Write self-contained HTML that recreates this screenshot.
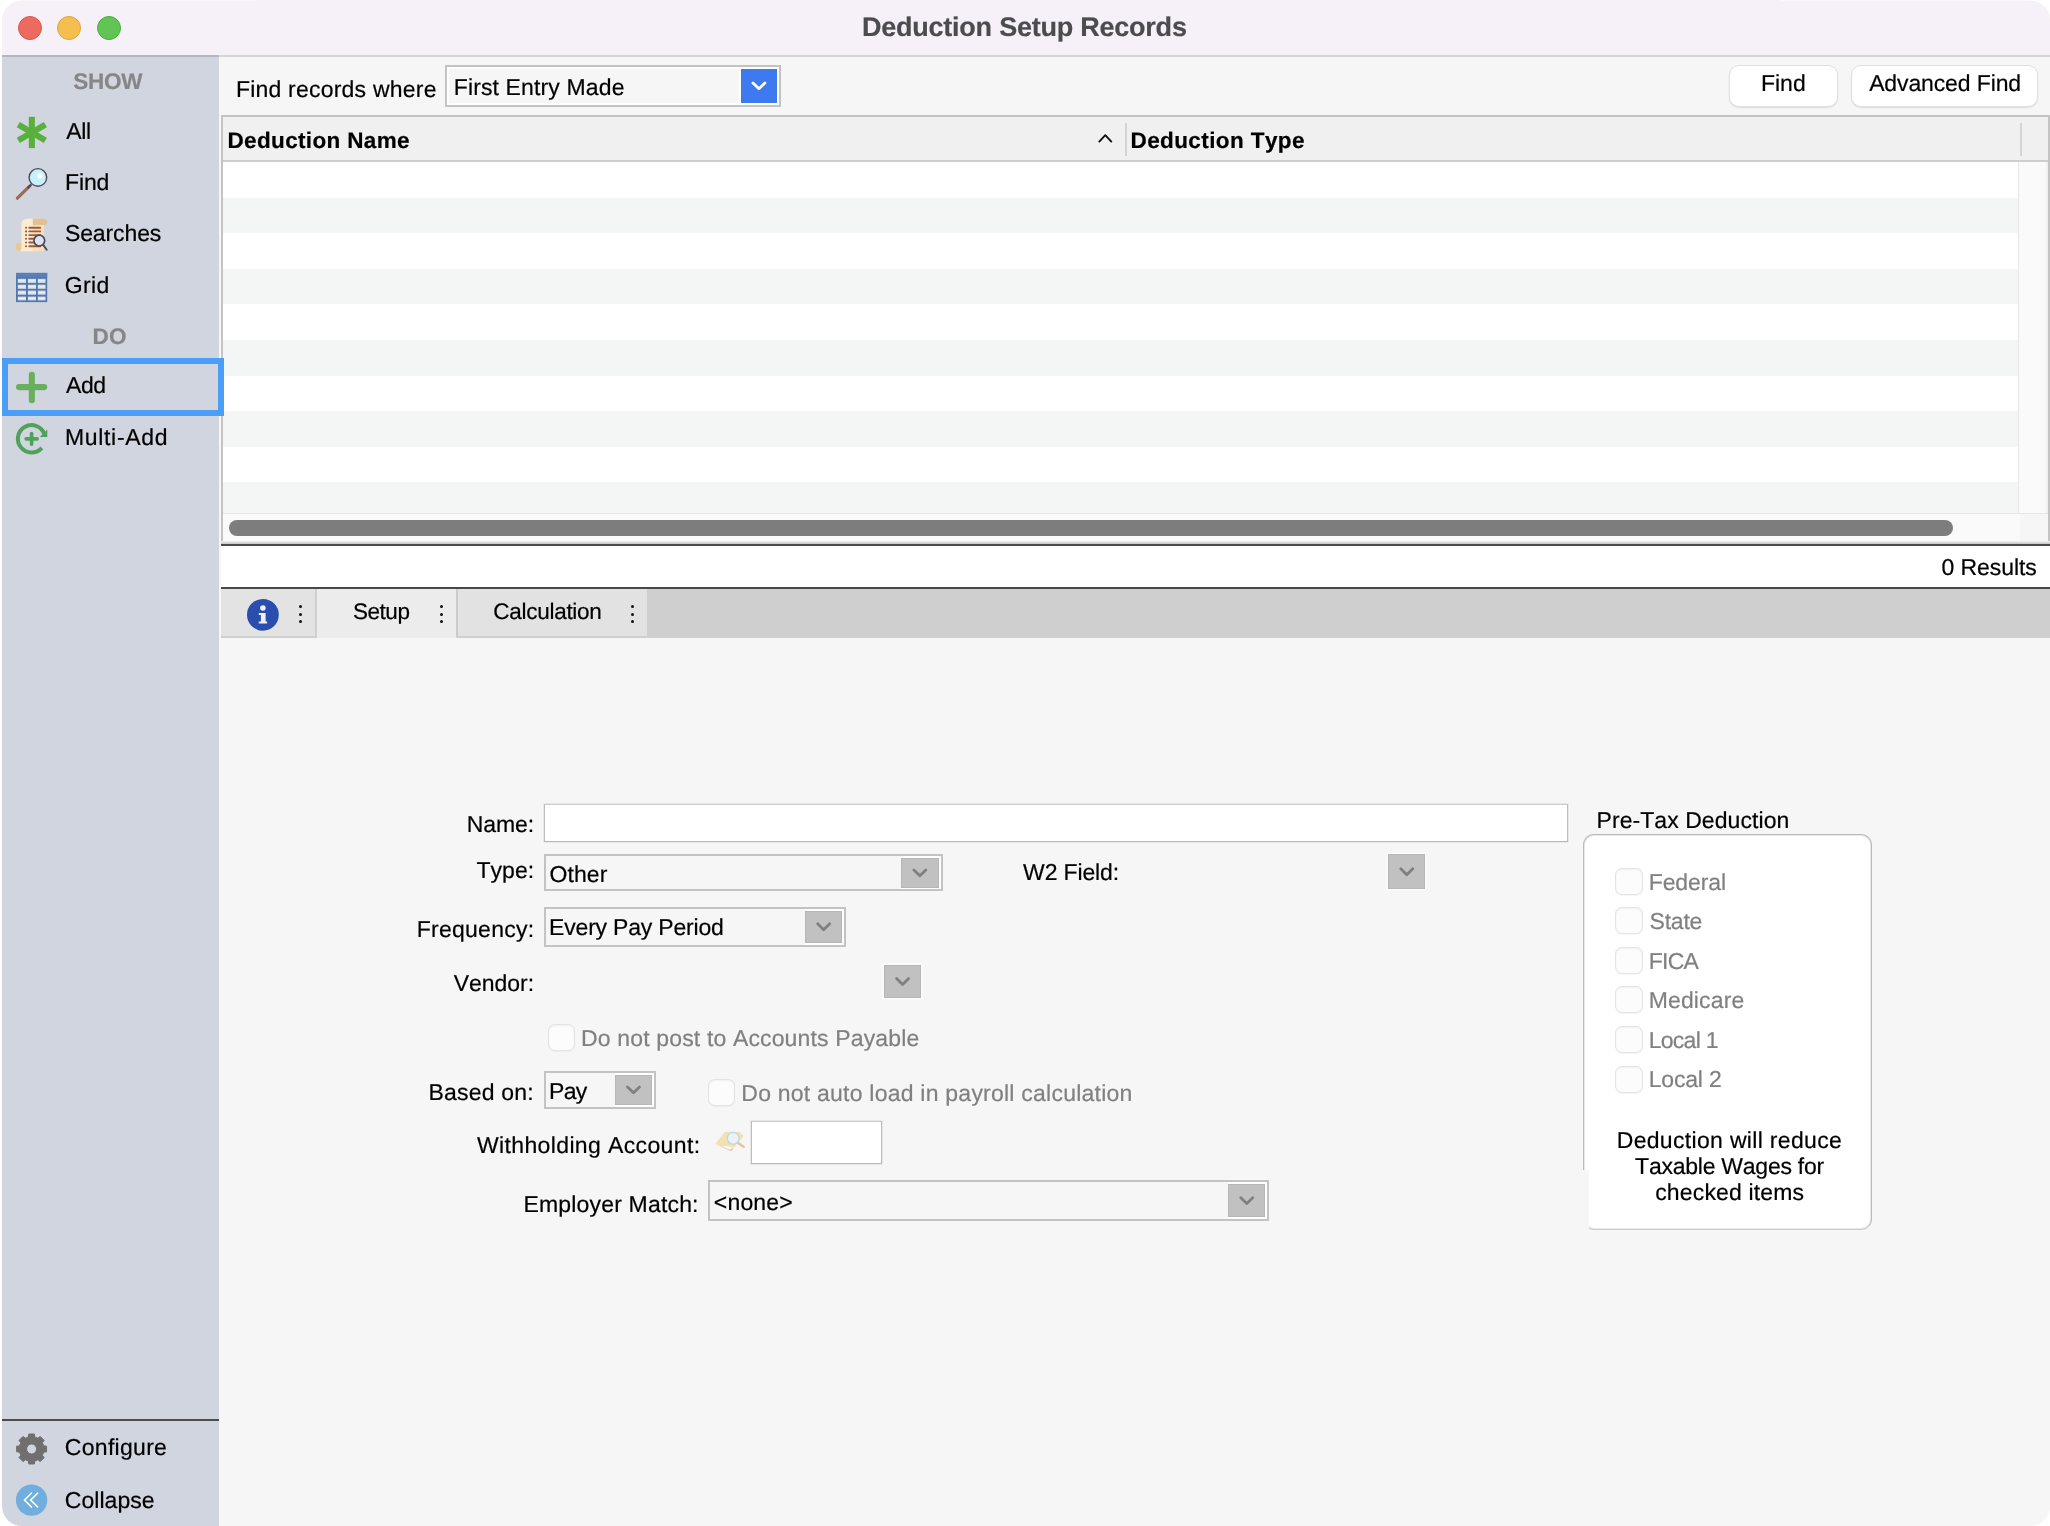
<!DOCTYPE html>
<html lang="en">
<head>
<meta charset="utf-8">
<title>Deduction Setup Records</title>
<style>
html,body{margin:0;padding:0;background:#fff;}
body{width:2050px;height:1526px;position:relative;overflow:hidden;font-family:"Liberation Sans",sans-serif;color:#000;}
#win{position:absolute;left:0;top:0;width:2050px;height:1526px;background:#f6f6f6;overflow:hidden;clip-path:inset(.5px 0 0 2px round 20px);will-change:transform;}
#win *{box-sizing:border-box;}
.a{position:absolute;}
.t{position:absolute;white-space:nowrap;-webkit-text-stroke:.2px;text-rendering:geometricPrecision;font-kerning:none;}
#titlebar{position:absolute;left:0;top:0;width:2050px;height:55px;background:#f6f1f8;}
.tl{position:absolute;width:24px;height:24px;border-radius:50%;top:16px;}
#sidebar{position:absolute;left:0;top:56px;width:219px;height:1470px;background:#d1d5df;}
.combo{position:absolute;border:2px solid #c3c3c3;background:#f6f6f6;}
.combo.f{box-shadow:inset 0 0 0 2px #fefefe;}
.dd{position:absolute;background:#c1c1c1;border:1px solid #b7b7b7;box-shadow:0 0 0 1.5px #fbfbfb;}
.dd.c{box-shadow:none;}
.wr{position:absolute;background:#fefefe;}
.dd svg{position:absolute;left:0;top:0;width:100%;height:100%;}
.btn{position:absolute;background:#fff;border:1px solid #e0e0e0;border-radius:10px;box-shadow:0 1px 1.5px rgba(0,0,0,.10);}
.cb{position:absolute;width:27.4px;height:27px;border-radius:7px;background:#fcfcfc;border:1px solid #e4e4e4;box-shadow:inset 0 1px 2px rgba(0,0,0,.05),0 .5px 1px rgba(0,0,0,.04);}
.row{position:absolute;left:224px;width:1796px;background:#f4f5f5;}
.inp{position:absolute;background:#fff;border:1px solid #bcbcbc;border-top-color:#cbcbcb;box-shadow:0 0 0 .6px #dcdcdc;}
.dots{position:absolute;width:4px;}
.dots i{position:absolute;left:0;width:3px;height:3px;border-radius:50%;background:#111;}
</style>
</head>
<body>
<div id="win">
<div id="titlebar">
<div class="tl" style="left:18px;background:#ed6a5e;border:1px solid #d8574c;"></div>
<div class="tl" style="left:57px;background:#f5bf4f;border:1px solid #dba640;"></div>
<div class="tl" style="left:97px;background:#61c554;border:1px solid #50a840;"></div>
<div class="t" style="left:861.99px;top:12px;font-size:27px;line-height:30px;letter-spacing:-0.233px;font-weight:700;color:#4c4b4e;">Deduction Setup Records</div>
</div>
<div id="sidebar"></div>
<div class="a" style="left:0;top:55px;width:219px;height:1.7px;background:#b3b7c3;"></div>
<div class="a" style="left:219px;top:55px;width:1831px;height:1.7px;background:#d5d5d5;"></div>
<div class="t" style="left:73.35px;top:69px;font-size:22.5px;line-height:25px;letter-spacing:-0.275px;font-weight:700;color:#868686;">SHOW</div>
<div class="t" style="left:66.16px;top:118px;font-size:23px;line-height:26px;letter-spacing:-0.289px;">All</div>
<div class="t" style="left:65.11px;top:169px;font-size:23px;line-height:26px;letter-spacing:-0.158px;">Find</div>
<div class="t" style="left:64.96px;top:220px;font-size:23px;line-height:26px;letter-spacing:-0.113px;">Searches</div>
<div class="t" style="left:64.84px;top:272px;font-size:23px;line-height:26px;letter-spacing:0.363px;">Grid</div>
<div class="t" style="left:92.39px;top:324px;font-size:22.5px;line-height:25px;letter-spacing:0.500px;font-weight:700;color:#868686;">DO</div>
<div class="t" style="left:65.96px;top:372px;font-size:23px;line-height:26px;letter-spacing:-0.398px;">Add</div>
<div class="t" style="left:65.01px;top:424px;font-size:23px;line-height:26px;letter-spacing:0.666px;">Multi-Add</div>
<div class="t" style="left:64.83px;top:1434px;font-size:23px;line-height:26px;letter-spacing:0.295px;">Configure</div>
<div class="t" style="left:64.83px;top:1487px;font-size:23px;line-height:26px;letter-spacing:0.042px;">Collapse</div>
<div class="a" style="left:2px;top:358px;width:222px;height:58px;border:6px solid #4a9ef6;z-index:5;"></div>
<div class="a" style="left:0;top:1419px;width:219px;height:2px;background:#4b4b4b;"></div>
<svg class="a" style="left:0;top:56px;" width="219" height="1470" viewBox="0 56 219 1470">
<g fill="#59b03c"><rect x="28.8" y="116.8" width="6.1" height="31.3"/><rect x="28.8" y="116.8" width="6.1" height="31.3" transform="rotate(60 31.85 132.45)"/><rect x="28.8" y="116.8" width="6.1" height="31.3" transform="rotate(-60 31.85 132.45)"/></g>
<g><line x1="17.4" y1="198.2" x2="28.6" y2="187.2" stroke="#9a6a56" stroke-width="3.2" stroke-linecap="round"/><line x1="27.6" y1="188.2" x2="31.4" y2="184.4" stroke="#5b4b57" stroke-width="2.6"/><circle cx="37.9" cy="177.4" r="8.8" fill="#c4f1fc" stroke="#4f4658" stroke-width="1.4"/><circle cx="40" cy="175.9" r="2.7" fill="#fff"/></g>
<g><path d="M21.4 243.4v7.8h-1.6a3.9 3.9 0 0 1-3.9-3.9v-3.9z" fill="#e9c796"/><path d="M21.4 224a5.2 5.2 0 0 1 5.2-5.2h6.3v32.4H19.6a3 3 0 0 0 1.8-2.6z" fill="#fdebd0"/><path d="M32.9 218.8h6a5 5 0 0 1 5.1 5.2v24.2a3 3 0 0 1-3 3H32.9z" fill="#fcdfb8"/><path d="M32.9 218.8H43.7a3.6 3.1 0 0 1 3.6 3.1a3.6 3.1 0 0 1-3.6 3.1H32.9z" fill="#e2c08f"/><line x1="29.3" y1="227.7" x2="40.2" y2="227.7" stroke="#9a5b45" stroke-width="1.9" stroke-linecap="round"/><circle cx="26" cy="227.7" r="1.05" fill="#9a5b45"/><line x1="29.3" y1="231.4" x2="40.2" y2="231.4" stroke="#9a5b45" stroke-width="1.9" stroke-linecap="round"/><circle cx="26" cy="231.4" r="1.05" fill="#9a5b45"/><line x1="29.3" y1="235.1" x2="40.2" y2="235.1" stroke="#9a5b45" stroke-width="1.9" stroke-linecap="round"/><circle cx="26" cy="235.1" r="1.05" fill="#9a5b45"/><line x1="29.3" y1="238.8" x2="40.2" y2="238.8" stroke="#9a5b45" stroke-width="1.9" stroke-linecap="round"/><circle cx="26" cy="238.8" r="1.05" fill="#9a5b45"/><line x1="29.3" y1="242.5" x2="40.2" y2="242.5" stroke="#9a5b45" stroke-width="1.9" stroke-linecap="round"/><circle cx="26" cy="242.5" r="1.05" fill="#9a5b45"/><line x1="29.3" y1="246.2" x2="40.2" y2="246.2" stroke="#9a5b45" stroke-width="1.9" stroke-linecap="round"/><circle cx="26" cy="246.2" r="1.05" fill="#9a5b45"/><circle cx="39.3" cy="240.6" r="5.4" fill="#dde3f5" stroke="#474b53" stroke-width="1.7"/><line x1="43.2" y1="244.9" x2="46.7" y2="249.8" stroke="#474b53" stroke-width="1.9" stroke-linecap="round"/></g>
<g><rect x="16" y="272.9" width="31.2" height="29.2" fill="#4f77b2"/><rect x="16" y="272.9" width="31.2" height="4" fill="#587fb6"/><rect x="17.8" y="278.8" width="8.2" height="4.1" fill="#dadde4"/><rect x="18.2" y="280.35" width="7.4" height="1" fill="#f0f1f4"/><rect x="17.8" y="284.7" width="8.2" height="4.1" fill="#dadde4"/><rect x="18.2" y="286.25" width="7.4" height="1" fill="#f0f1f4"/><rect x="17.8" y="290.6" width="8.2" height="4.1" fill="#dadde4"/><rect x="18.2" y="292.15" width="7.4" height="1" fill="#f0f1f4"/><rect x="17.8" y="296.6" width="8.2" height="3.8" fill="#dadde4"/><rect x="18.2" y="298.00" width="7.4" height="1" fill="#f0f1f4"/><rect x="27.9" y="278.8" width="8.1" height="4.1" fill="#dadde4"/><rect x="28.299999999999997" y="280.35" width="7.3" height="1" fill="#f0f1f4"/><rect x="27.9" y="284.7" width="8.1" height="4.1" fill="#dadde4"/><rect x="28.299999999999997" y="286.25" width="7.3" height="1" fill="#f0f1f4"/><rect x="27.9" y="290.6" width="8.1" height="4.1" fill="#dadde4"/><rect x="28.299999999999997" y="292.15" width="7.3" height="1" fill="#f0f1f4"/><rect x="27.9" y="296.6" width="8.1" height="3.8" fill="#dadde4"/><rect x="28.299999999999997" y="298.00" width="7.3" height="1" fill="#f0f1f4"/><rect x="37.8" y="278.8" width="7.7" height="4.1" fill="#dadde4"/><rect x="38.199999999999996" y="280.35" width="6.9" height="1" fill="#f0f1f4"/><rect x="37.8" y="284.7" width="7.7" height="4.1" fill="#dadde4"/><rect x="38.199999999999996" y="286.25" width="6.9" height="1" fill="#f0f1f4"/><rect x="37.8" y="290.6" width="7.7" height="4.1" fill="#dadde4"/><rect x="38.199999999999996" y="292.15" width="6.9" height="1" fill="#f0f1f4"/><rect x="37.8" y="296.6" width="7.7" height="3.8" fill="#dadde4"/><rect x="38.199999999999996" y="298.00" width="6.9" height="1" fill="#f0f1f4"/></g>
<g stroke="#69b05e" stroke-width="6.1" stroke-linecap="round"><line x1="31.85" y1="374.8" x2="31.85" y2="400.2"/><line x1="19" y1="387.1" x2="44.2" y2="387.1"/></g>
<g><path d="M44.30 433.67A13.7 13.7 0 1 0 41.86 447.88" fill="none" stroke="#50a25b" stroke-width="4"/><path d="M47.3 429.4V436.9H39.8z" fill="#50a25b"/><g stroke="#50a25b" stroke-width="3.7" stroke-linecap="round"><line x1="31.6" y1="433.6" x2="31.6" y2="444.1"/><line x1="26.2" y1="438.8" x2="37.1" y2="438.8"/></g></g>
<path d="M28.45 1436.90L28.79 1434.01L34.41 1434.01L34.75 1436.90L37.92 1438.22L40.22 1436.42L44.18 1440.38L42.38 1442.68L43.70 1445.85L46.59 1446.19L46.59 1451.81L43.70 1452.15L42.38 1455.32L44.18 1457.62L40.22 1461.58L37.92 1459.78L34.75 1461.10L34.41 1463.99L28.79 1463.99L28.45 1461.10L25.28 1459.78L22.98 1461.58L19.02 1457.62L20.82 1455.32L19.50 1452.15L16.61 1451.81L16.61 1446.19L19.50 1445.85L20.82 1442.68L19.02 1440.38L22.98 1436.42L25.28 1438.22ZM36.60 1449A5.0 5.0 0 1 0 26.60 1449A5.0 5.0 0 1 0 36.60 1449Z" fill="#6f6f6f" fill-rule="evenodd" stroke="#6f6f6f" stroke-width="1" stroke-linejoin="round"/>
<g><circle cx="31.6" cy="1500.1" r="15.7" fill="#70aedf"/><path d="M31.9 1492.7L24.4 1500.1L31.9 1507.4M38.1 1492.7L30.6 1500.1L38.1 1507.4" fill="none" stroke="#fff" stroke-width="1.5"/></g>
</svg>
<div class="t" style="left:235.91px;top:76px;font-size:23px;line-height:26px;letter-spacing:0.215px;">Find records where</div>
<div class="wr" style="left:739.2px;top:67.2px;width:39.8px;height:37.5px;"></div>
<div class="dd c" style="left:741.2px;top:69.2px;width:35.9px;height:33.7px;background:#3f79f0;border-color:#3f79f0;"><svg viewBox="0 0 33.9 31.7"><path d="M10.95 12.95L16.95 18.85L22.95 12.95" fill="none" stroke="#fff" stroke-width="2.8" stroke-linecap="round" stroke-linejoin="round"/></svg></div>
<div class="combo f" style="left:445px;top:65.2px;width:336px;height:41.5px;background:none;"></div>
<div class="t" style="left:453.71px;top:74px;font-size:23px;line-height:26px;letter-spacing:0.134px;">First Entry Made</div>
<div class="btn" style="left:1729.4px;top:65px;width:109px;height:41.8px;"></div>
<div class="btn" style="left:1851.4px;top:65px;width:187px;height:41.8px;"></div>
<div class="t" style="left:1761.01px;top:70px;font-size:23px;line-height:26px;letter-spacing:-0.024px;">Find</div>
<div class="t" style="left:1869.16px;top:70px;font-size:23px;line-height:26px;letter-spacing:-0.125px;">Advanced Find</div>
<div class="a" style="left:221px;top:115px;width:1829px;height:428px;background:#fff;border:2px solid #c4c4c4;border-bottom:none;"></div>
<div class="a" style="left:223px;top:117px;width:1825px;height:45px;background:#f0f0f0;border-bottom:2px solid #cdcdcd;"></div>
<div class="t" style="left:227.49px;top:128px;font-size:22.5px;line-height:25px;letter-spacing:0.350px;font-weight:700;">Deduction Name</div>
<div class="t" style="left:1130.49px;top:128px;font-size:22.5px;line-height:25px;letter-spacing:0.401px;font-weight:700;">Deduction Type</div>
<svg class="a" style="left:1095px;top:130px;" width="20" height="16" viewBox="1095 130 20 16"><path d="M1099.3 141.6L1105.3 135.2L1111.3 141.6" fill="none" stroke="#111" stroke-width="1.9" stroke-linecap="round" stroke-linejoin="round"/></svg>
<div class="a" style="left:1125px;top:122.8px;width:2px;height:33px;background:#d4d4d4;"></div>
<div class="a" style="left:2020.2px;top:122.8px;width:2px;height:33px;background:#d4d4d4;"></div>
<div class="row" style="top:197.59px;height:35.59px;left:223px;width:1795.3px;"></div>
<div class="row" style="top:268.77px;height:35.59px;left:223px;width:1795.3px;"></div>
<div class="row" style="top:339.95px;height:35.59px;left:223px;width:1795.3px;"></div>
<div class="row" style="top:411.13px;height:35.59px;left:223px;width:1795.3px;"></div>
<div class="row" style="top:482.31px;height:30.69px;left:223px;width:1795.3px;"></div>
<div class="a" style="left:2018.3px;top:162px;width:29.7px;height:351px;background:#fafafa;border-left:1.5px solid #e7e7e7;border-right:2px solid #f0f0f0;"></div>
<div class="a" style="left:223px;top:512.6px;width:1825px;height:30px;background:#fafafa;border-top:1px solid #e6e6e6;"></div>
<div class="a" style="left:2019.8px;top:513.6px;width:28.2px;height:29px;background:#f6f6f6;"></div>
<div class="a" style="left:229px;top:519.7px;width:1724px;height:16px;border-radius:8px;background:#7d7d7d;"></div>
<div class="a" style="left:221px;top:541.4px;width:1829px;height:2.6px;background:linear-gradient(#f4f4f4,#c4c4c4);"></div>
<div class="a" style="left:221px;top:543.8px;width:1829px;height:2.1px;background:#4b4b4b;"></div>
<div class="a" style="left:221px;top:545.9px;width:1829px;height:41.2px;background:#fff;"></div>
<div class="t" style="left:1941.50px;top:554px;font-size:23px;line-height:26px;letter-spacing:-0.068px;">0 Results</div>
<div class="a" style="left:221px;top:586.8px;width:1829px;height:2.2px;background:#484848;"></div>
<div class="a" style="left:221px;top:589px;width:1829px;height:48.6px;background:#cfcfcf;"></div>
<div class="a" style="left:221px;top:589px;width:96px;height:48.8px;background:#e3e3e3;border-right:2px solid #cecece;border-bottom:2px solid #cfcfcf;"></div>
<div class="a" style="left:317px;top:589px;width:139.5px;height:48.6px;background:#ececec;"></div>
<div class="a" style="left:456px;top:589px;width:191.2px;height:48.8px;background:#e2e2e2;border-left:2px solid #cbcbcb;border-bottom:2px solid #cfcfcf;"></div>
<div class="t" style="left:352.88px;top:599px;font-size:22.5px;line-height:25px;letter-spacing:-0.433px;">Setup</div>
<div class="t" style="left:493.26px;top:599px;font-size:22.5px;line-height:25px;letter-spacing:-0.271px;">Calculation</div>
<div class="dots" style="left:298.6px;top:0;"><i style="top:605.4px"></i><i style="top:612.6px"></i><i style="top:619.8px"></i></div>
<div class="dots" style="left:439.7px;top:0;"><i style="top:605.4px"></i><i style="top:612.6px"></i><i style="top:619.8px"></i></div>
<div class="dots" style="left:631.0px;top:0;"><i style="top:605.4px"></i><i style="top:612.6px"></i><i style="top:619.8px"></i></div>
<svg class="a" style="left:245px;top:597px;" width="36" height="36" viewBox="245 597 36 36"><circle cx="262.9" cy="614.8" r="15.9" fill="#2a4eae"/><circle cx="262.9" cy="608" r="2.8" fill="#eef0fb"/><path d="M258.8 612.9H265.6V621.6H267.1V623.6H258.8V621.6H260.9V615.1H258.8Z" fill="#eef0fb"/></svg>
<div class="t" style="left:466.71px;top:811px;font-size:23px;line-height:26px;letter-spacing:-0.089px;">Name:</div>
<div class="inp" style="left:544px;top:804px;width:1023.6px;height:38px;"></div>
<div class="t" style="left:476.48px;top:857px;font-size:23px;line-height:26px;letter-spacing:0.024px;">Type:</div>
<div class="wr" style="left:901.2px;top:856px;width:39.8px;height:33.0px;"></div>
<div class="dd c" style="left:901.2px;top:858.1px;width:37.8px;height:29.6px;background:#c1c1c1;border-color:#b7b7b7;"><svg viewBox="0 0 35.8 27.6"><path d="M11.90 10.90L17.90 16.80L23.90 10.90" fill="none" stroke="#808080" stroke-width="2.8" stroke-linecap="round" stroke-linejoin="round"/></svg></div>
<div class="combo" style="left:544px;top:854px;width:399px;height:37.0px;background:none;"></div>
<div class="t" style="left:549.61px;top:861px;font-size:23px;line-height:26px;letter-spacing:0.062px;">Other</div>
<div class="t" style="left:1023.10px;top:859px;font-size:23px;line-height:26px;letter-spacing:-0.141px;">W2 Field:</div>
<div class="dd" style="left:1387.8px;top:854px;width:37.6px;height:35.3px;background:#c1c1c1;border-color:#b7b7b7;"><svg viewBox="0 0 35.6 33.3"><path d="M11.80 13.75L17.80 19.65L23.80 13.75" fill="none" stroke="#808080" stroke-width="2.8" stroke-linecap="round" stroke-linejoin="round"/></svg></div>
<div class="t" style="left:416.71px;top:916px;font-size:23px;line-height:26px;letter-spacing:0.259px;">Frequency:</div>
<div class="wr" style="left:804.8px;top:909.4px;width:39.2px;height:35.2px;"></div>
<div class="dd c" style="left:804.8px;top:911.3px;width:37.3px;height:31.4px;background:#c1c1c1;border-color:#b7b7b7;"><svg viewBox="0 0 35.3 29.4"><path d="M11.65 11.80L17.65 17.70L23.65 11.80" fill="none" stroke="#808080" stroke-width="2.8" stroke-linecap="round" stroke-linejoin="round"/></svg></div>
<div class="combo" style="left:544px;top:907.4px;width:302px;height:39.2px;background:none;"></div>
<div class="t" style="left:549.11px;top:914px;font-size:23px;line-height:26px;letter-spacing:-0.195px;">Every Pay Period</div>
<div class="t" style="left:453.80px;top:970px;font-size:23px;line-height:26px;letter-spacing:-0.042px;">Vendor:</div>
<div class="dd" style="left:883.9px;top:964.8px;width:37.2px;height:33.0px;background:#c1c1c1;border-color:#b7b7b7;"><svg viewBox="0 0 35.2 31.0"><path d="M11.60 12.60L17.60 18.50L23.60 12.60" fill="none" stroke="#808080" stroke-width="2.8" stroke-linecap="round" stroke-linejoin="round"/></svg></div>
<div class="cb" style="left:547.8px;top:1024.3px;"></div>
<div class="t" style="left:581.11px;top:1025px;font-size:23px;line-height:26px;letter-spacing:0.147px;color:#808080;">Do not post to Accounts Payable</div>
<div class="t" style="left:428.51px;top:1079px;font-size:23px;line-height:26px;letter-spacing:0.201px;">Based on:</div>
<div class="wr" style="left:615px;top:1073.3px;width:39.0px;height:33.5px;"></div>
<div class="dd c" style="left:615px;top:1075.2px;width:37.0px;height:29.6px;background:#c1c1c1;border-color:#b7b7b7;"><svg viewBox="0 0 35.0 27.6"><path d="M11.50 10.90L17.50 16.80L23.50 10.90" fill="none" stroke="#808080" stroke-width="2.8" stroke-linecap="round" stroke-linejoin="round"/></svg></div>
<div class="combo" style="left:544px;top:1071.3px;width:112px;height:37.5px;background:none;"></div>
<div class="t" style="left:549.11px;top:1078px;font-size:23px;line-height:26px;letter-spacing:-0.750px;">Pay</div>
<div class="cb" style="left:708px;top:1079.4px;"></div>
<div class="t" style="left:741.31px;top:1080px;font-size:23px;line-height:26px;letter-spacing:0.229px;color:#808080;">Do not auto load in payroll calculation</div>
<div class="t" style="left:476.90px;top:1132px;font-size:23px;line-height:26px;letter-spacing:0.376px;">Withholding Account:</div>
<div class="inp" style="left:751px;top:1121px;width:131px;height:43px;"></div>
<div class="t" style="left:523.51px;top:1191px;font-size:23px;line-height:26px;letter-spacing:0.174px;">Employer Match:</div>
<div class="wr" style="left:1227.9px;top:1182.4px;width:39.1px;height:37.0px;"></div>
<div class="dd c" style="left:1227.9px;top:1184.2px;width:37.5px;height:33.2px;background:#c1c1c1;border-color:#b7b7b7;"><svg viewBox="0 0 35.5 31.2"><path d="M11.75 12.70L17.75 18.60L23.75 12.70" fill="none" stroke="#808080" stroke-width="2.8" stroke-linecap="round" stroke-linejoin="round"/></svg></div>
<div class="combo" style="left:708px;top:1180.4px;width:561px;height:41.0px;background:none;"></div>
<div class="t" style="left:713.87px;top:1189px;font-size:23px;line-height:26px;letter-spacing:0.166px;">&lt;none&gt;</div>
<svg class="a" style="left:712px;top:1128px;opacity:.62" width="36" height="26" viewBox="712 1128 36 26"><path d="M724.9 1131.7H739.5L743.7 1135.9L731.2 1150.8L715.4 1143.7Z" fill="#f3d588"/><path d="M716.4 1144.6L731 1151.2L733.6 1148.2L729.4 1149.4Z" fill="#d8a07a"/><path d="M722 1146.4L730.6 1149.8L732.6 1147.6L726 1146Z" fill="#fff"/><line x1="737.6" y1="1142.6" x2="743.6" y2="1146.8" stroke="#e3a95c" stroke-width="2.6" stroke-linecap="round"/><circle cx="733.2" cy="1138.3" r="5.9" fill="#e6f1f8" stroke="#9cc4e0" stroke-width="1.3"/></svg>
<div class="t" style="left:1596.51px;top:807px;font-size:23px;line-height:26px;letter-spacing:0.064px;">Pre-Tax Deduction</div>
<div class="a" style="left:1583px;top:834px;width:289px;height:395.6px;background:#fff;border:1px solid #bbb;border-bottom-color:#ccc;box-shadow:inset 0 0 0 1px #e8e8e8;border-radius:11px;"></div>
<div class="a" style="left:1580px;top:1169.9px;width:9px;height:62px;background:#f6f6f6;"></div>
<div class="cb" style="left:1615.4px;top:868.0px;"></div>
<div class="t" style="left:1648.71px;top:869px;font-size:23px;line-height:26px;letter-spacing:-0.093px;color:#808080;">Federal</div>
<div class="cb" style="left:1615.4px;top:907.4px;"></div>
<div class="t" style="left:1649.56px;top:908px;font-size:23px;line-height:26px;letter-spacing:-0.209px;color:#808080;">State</div>
<div class="cb" style="left:1615.4px;top:947.0px;"></div>
<div class="t" style="left:1648.71px;top:948px;font-size:23px;line-height:26px;letter-spacing:-0.750px;color:#808080;">FICA</div>
<div class="cb" style="left:1615.4px;top:986.3px;"></div>
<div class="t" style="left:1648.71px;top:987px;font-size:23px;line-height:26px;letter-spacing:0.131px;color:#808080;">Medicare</div>
<div class="cb" style="left:1615.4px;top:1026.3px;"></div>
<div class="t" style="left:1648.71px;top:1027px;font-size:23px;line-height:26px;letter-spacing:-0.726px;color:#808080;">Local 1</div>
<div class="cb" style="left:1615.4px;top:1065.6px;"></div>
<div class="t" style="left:1648.71px;top:1066px;font-size:23px;line-height:26px;letter-spacing:-0.187px;color:#808080;">Local 2</div>
<div class="t" style="left:1616.71px;top:1127px;font-size:23px;line-height:26px;letter-spacing:0.325px;">Deduction will reduce</div>
<div class="t" style="left:1635.08px;top:1153px;font-size:23px;line-height:26px;letter-spacing:-0.246px;">Taxable Wages for</div>
<div class="t" style="left:1655.22px;top:1179px;font-size:23px;line-height:26px;letter-spacing:0.150px;">checked items</div>
</div>
</body>
</html>
